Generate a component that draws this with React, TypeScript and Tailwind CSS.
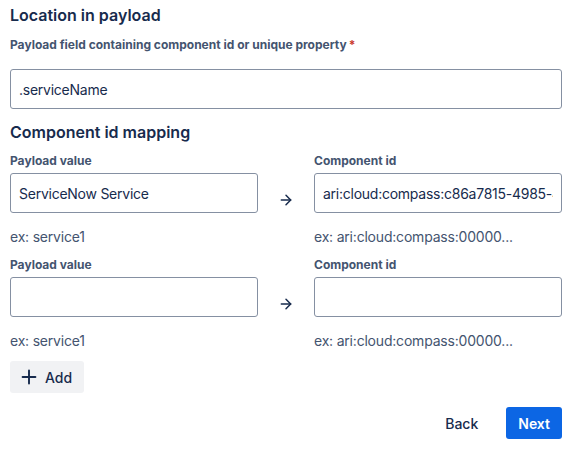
import { ArrowRight, Plus } from 'lucide-react'

interface MappingRow {
  payloadValue: string
  componentId: string
}

const rows: MappingRow[] = [
  { payloadValue: 'ServiceNow Service', componentId: 'ari:cloud:compass:c86a7815-4985-4c2e-9a1f-0f2d3c5b7e11' },
  { payloadValue: '', componentId: '' },
]

function TextField({ value }: { value: string }) {
  return (
    <input
      readOnly
      value={value}
      className="w-full h-[40px] px-[8px] border border-[#8590a2] rounded-[3px] text-[14px] tracking-[-0.25px] text-[#172b4d] bg-white outline-none"
    />
  )
}

export default function App() {
  return (
    <div className="w-[577px] h-[453px] bg-white pl-[10px] pr-[15px] pt-[5px] font-['Inter',sans-serif] text-[#172b4d]">
      <h2 className="text-[16px] leading-[20px] font-semibold">Location in payload</h2>
      <label className="block mt-[12px] text-[12px] leading-[16px] font-bold text-[#44546f]">
        Payload field containing component id or unique property
        <span className="text-[#c9372c] ml-[2px]">*</span>
      </label>
      <div className="mt-[16px]">
        <TextField value=".serviceName" />
      </div>

      <h2 className="mt-[13px] text-[16px] leading-[20px] font-semibold">Component id mapping</h2>

      {rows.map((row, i) => (
        <div key={i} className={i === 0 ? 'mt-[11px]' : 'mt-[10px]'}>
          <div className="grid grid-cols-[248px_56px_248px]">
            <label className="text-[12px] leading-[16px] font-bold text-[#44546f]">Payload value</label>
            <div />
            <label className="text-[12px] leading-[16px] font-bold text-[#44546f]">Component id</label>
          </div>
          <div className="grid grid-cols-[248px_56px_248px] mt-[4px]">
            <TextField value={row.payloadValue} />
            <div className="flex justify-center pt-[19px]">
              <ArrowRight className="w-[16px] h-[16px]" strokeWidth={2.25} />
            </div>
            <TextField value={row.componentId} />
          </div>
          <div className="grid grid-cols-[248px_56px_248px] mt-[14px] text-[14px] leading-[20px] tracking-[-0.2px] text-[#44546f]">
            <span>ex: service1</span>
            <div />
            <span>ex: ari:cloud:compass:00000...</span>
          </div>
        </div>
      ))}

      <button className="mt-[10px] h-[32px] flex items-center gap-[5px] pl-[8px] pr-[12px] rounded-[3px] bg-[#f1f2f4] text-[14px] font-medium text-[#172b4d]">
        <Plus className="w-[22px] h-[22px]" strokeWidth={2.1} />
        Add
      </button>

      <div className="mt-[14px] flex justify-end gap-[28px] items-center">
        <button className="h-[32px] text-[14px] font-medium text-[#172b4d]">Back</button>
        <button className="h-[32px] px-[12px] rounded-[3px] bg-[#0c66e4] text-white text-[14px] font-semibold">Next</button>
      </div>
    </div>
  )
}
